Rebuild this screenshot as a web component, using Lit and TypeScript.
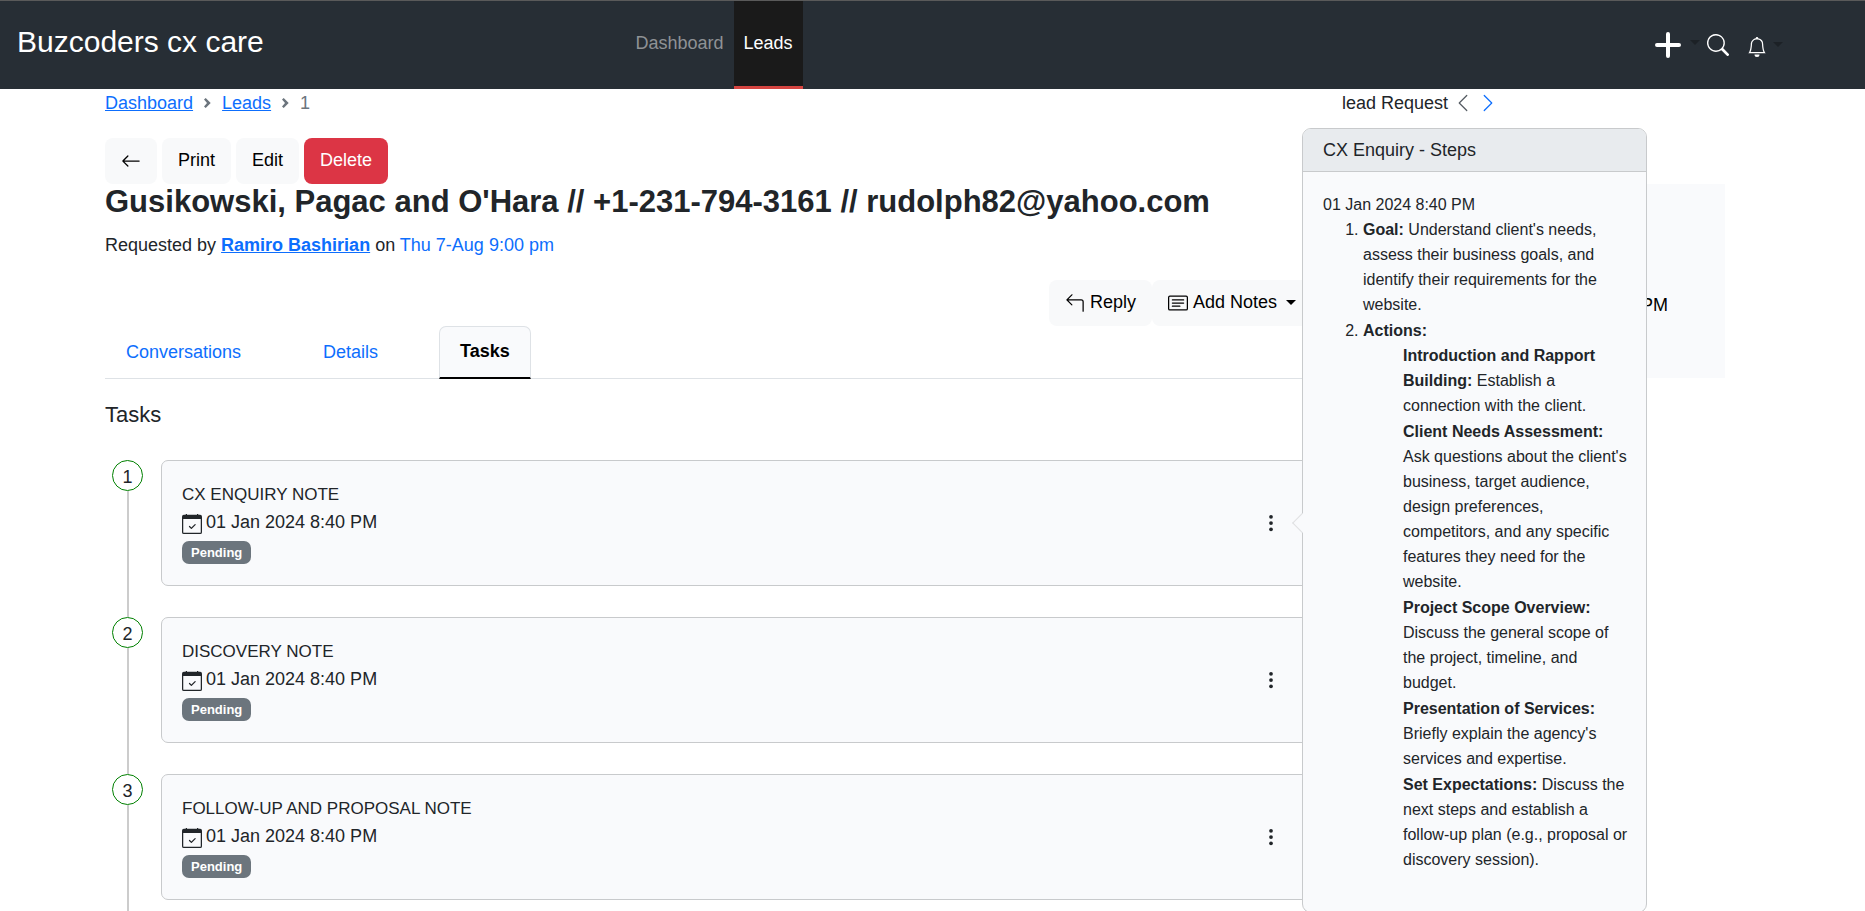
import { LitElement, html, css, svg } from "lit";
import { customElement, property } from "lit/decorators.js";

const shared = css`
  * { box-sizing: border-box; }
  a { color: #0d6efd; }
  svg { display: block; fill: currentColor; flex: none; }
  button { font: inherit; color: inherit; border: 0; margin: 0; cursor: pointer; }
  .caret { border-top: 5px solid; border-left: 5px solid transparent; border-right: 5px solid transparent; }
`;

const icons: Record<string, unknown> = {
  plus: svg`<path fill-rule="evenodd" d="M8 2a.5.5 0 0 1 .5.5v5h5a.5.5 0 0 1 0 1h-5v5a.5.5 0 0 1-1 0v-5h-5a.5.5 0 0 1 0-1h5v-5A.5.5 0 0 1 8 2" stroke="currentColor" stroke-width="1"/>`,
  search: svg`<path d="M11.742 10.344a6.5 6.5 0 1 0-1.397 1.398h-.001q.044.06.098.115l3.85 3.85a1 1 0 0 0 1.415-1.414l-3.85-3.85a1 1 0 0 0-.115-.1zM12 6.5a5.5 5.5 0 1 1-11 0 5.5 5.5 0 0 1 11 0"/>`,
  bell: svg`<path d="M8 16a2 2 0 0 0 2-2H6a2 2 0 0 0 2 2M8 1.918l-.797.161A4 4 0 0 0 4 6c0 .628-.134 2.197-.459 3.742-.16.767-.376 1.566-.663 2.258h10.244c-.287-.692-.502-1.49-.663-2.258C12.134 8.197 12 6.628 12 6a4 4 0 0 0-3.203-3.92zM14.22 12c.223.447.481.801.78 1H1c.299-.199.557-.553.78-1C2.68 10.2 3 6.88 3 6c0-2.42 1.72-4.44 4.005-4.901a1 1 0 1 1 1.99 0A5 5 0 0 1 13 6c0 .88.32 4.2 1.22 6"/>`,
  left: svg`<path fill-rule="evenodd" d="M11.354 1.646a.5.5 0 0 1 0 .708L5.707 8l5.647 5.646a.5.5 0 0 1-.708.708l-6-6a.5.5 0 0 1 0-.708l6-6a.5.5 0 0 1 .708 0"/>`,
  right: svg`<path fill-rule="evenodd" d="M4.646 1.646a.5.5 0 0 1 .708 0l6 6a.5.5 0 0 1 0 .708l-6 6a.5.5 0 0 1-.708-.708L10.293 8 4.646 2.354a.5.5 0 0 1 0-.708"/>`,
  back: svg`<path fill-rule="evenodd" d="M15 8a.5.5 0 0 0-.5-.5H2.707l3.147-3.146a.5.5 0 1 0-.708-.708l-4 4a.5.5 0 0 0 0 .708l4 4a.5.5 0 0 0 .708-.708L2.707 8.500H14.5A.5.5 0 0 0 15 8"/>`,
  reply: svg`<path fill-rule="evenodd" d="M14.500 15a.5.5 0 0 0 .5-.5V7a2 2 0 0 0-2-2H2.700l3.150-3.150a.5.5 0 1 0-.700-.700l-4 4a.5.5 0 0 0 0 .700l4 4a.5.5 0 0 0 .700-.700L2.700 6H13a1 1 0 0 1 1 1v7.500a.5.5 0 0 0 .5.5"/>`,
  notes: svg`<path d="M14.500 3a.5.5 0 0 1 .5.5v9a.5.5 0 0 1-.5.5h-13a.5.5 0 0 1-.5-.5v-9a.5.5 0 0 1 .5-.5zm-13-1A1.500 1.500 0 0 0 0 3.500v9A1.500 1.500 0 0 0 1.500 14h13a1.500 1.500 0 0 0 1.500-1.500v-9A1.500 1.500 0 0 0 14.500 2z"/><path d="M3 5.500a.5.5 0 0 1 .5-.5h9a.5.5 0 0 1 0 1h-9a.5.5 0 0 1-.5-.5M3 8a.5.5 0 0 1 .5-.5h9a.5.5 0 0 1 0 1h-9A.5.5 0 0 1 3 8m0 2.500a.5.5 0 0 1 .5-.5h6a.5.5 0 0 1 0 1h-6a.5.5 0 0 1-.5-.5"/>`,
  calendar: svg`<path d="M10.854 8.146a.5.5 0 0 1 0 .708l-3 3a.5.5 0 0 1-.708 0l-1.500-1.500a.5.5 0 0 1 .708-.708L7.500 10.793l2.646-2.647a.5.5 0 0 1 .708 0"/><path fill-rule="evenodd" d="M3 0h1v.6h8V0h1v.6h1.500A1.500 1.500 0 0 1 16 2.100v12.400a1.500 1.500 0 0 1-1.500 1.500h-13A1.500 1.500 0 0 1 0 14.500V2.100A1.500 1.500 0 0 1 1.500.6H3zM1 4v10.500a.5.5 0 0 0 .5.5h13a.5.5 0 0 0 .5-.5V4z"/>`,
  dots: svg`<circle cx="8" cy="3" r="1.500"/><circle cx="8" cy="8" r="1.500"/><circle cx="8" cy="13" r="1.500"/>`,
};

const icon = (name: string, size: number) => html`
  <svg width=${size} height=${size} viewBox="0 0 16 16" aria-hidden="true">${icons[name]}</svg>`;

const separator = html`
  <li aria-hidden="true"><svg width="7" height="10" viewBox="0 0 7 10"><path d="M0 1.400 1.700 0 6.700 5 1.700 10 0 8.600 3 5z"/></svg></li>`;

@customElement("site-header")
class SiteHeader extends LitElement {
  static styles = [shared, css`
    :host {
      display: grid; grid-template-columns: 1fr auto 1fr; height: 89px;
      background: #272e35; color: #fff; border-top: 1px solid #5a5a5a;
    }
    .brand { font-size: 30px; line-height: 36px; padding: 23px 17px; color: #fff; text-decoration: none; }
    nav { display: flex; margin-right: 437px; }
    .link { padding: 28px 10px 0; color: #8f9295; text-decoration: none; border-bottom: 3px solid transparent; }
    .current { color: #fff; background: #1a1a1a; border-bottom-color: #d64541; }
    .tools { display: flex; justify-content: flex-end; align-items: center; align-self: start; padding: 28px 82px 0 0; }
    .tool { display: flex; align-items: center; background: none; padding: 0; gap: 6px; }
    .caret { color: #1c2126; margin-bottom: 5px; }
    .search { margin: 0 18px 0 7px; }
    .bell { padding-top: 4px; }
  `];

  render() {
    return html`
      <a class="brand" href="#">Buzcoders cx care</a>
      <nav aria-label="Main">
        <a class="link" href="#">Dashboard</a>
        <a class="link current" href="#" aria-current="page">Leads</a>
      </nav>
      <div class="tools">
        <button class="tool" aria-label="Create">${icon("plus", 32)}<span class="caret"></span></button>
        <button class="tool search" aria-label="Search">${icon("search", 22)}</button>
        <button class="tool bell" aria-label="Notifications">${icon("bell", 20)}<span class="caret"></span></button>
      </div>`;
  }
}

@customElement("task-card")
class TaskCard extends LitElement {
  @property({ type: Number }) index = 1;
  @property() name = "";
  @property() due = "";
  @property() status = "";

  static styles = [shared, css`
    :host { display: grid; grid-template-columns: 56px 1fr; }
    .rail { display: flex; flex-direction: column; align-items: center; width: 45px; }
    .number {
      flex: none; width: 31px; height: 31px; border: 1px solid #008000; border-radius: 50%;
      display: flex; align-items: center; justify-content: center; padding-top: 2px;
    }
    .line { flex: 1; width: 2px; background: #ccc; }
    .card {
      display: flex; align-items: center; justify-content: space-between; margin-bottom: 31px;
      padding: 20px; border: 1px solid #c8cacc; border-radius: 7px; background: #f9fafc;
    }
    .name { margin: 0; font-size: 17px; line-height: 27px; font-weight: 400; }
    .due { display: flex; align-items: center; gap: 4px; margin: 0; line-height: 29px; }
    .due svg { margin-top: 3px; }
    .badge {
      font-size: 13px; line-height: 13px; font-weight: 700; color: #fff;
      background: #6c757d; border-radius: 7px; padding: 5px 9px;
    }
    .status { display: flex; padding: 4px 0 1px; }
    .menu { background: none; padding: 0; margin-right: 10px; }
  `];

  render() {
    return html`
      <div class="rail"><span class="number">${this.index}</span><span class="line"></span></div>
      <article class="card">
        <div>
          <h3 class="name">${this.name}</h3>
          <p class="due">${icon("calendar", 20)}<time>${this.due}</time></p>
          <div class="status"><span class="badge">${this.status}</span></div>
        </div>
        <button class="menu" aria-label="Task options">${icon("dots", 20)}</button>
      </article>`;
  }
}

@customElement("steps-popover")
class StepsPopover extends LitElement {
  static styles = [shared, css`
    :host {
      display: block; width: 345px; border: 1px solid #c8cacc; border-radius: 9px;
      background: #f9fafc; font-size: 16px; line-height: 25px;
    }
    .title {
      margin: 0; padding: 10px 20px; font-size: 18px; line-height: 22px; font-weight: 400;
      background: #e8ebee; border-bottom: 1px solid #c8cacc; border-radius: 8px 8px 0 0;
    }
    .body { padding: 20px 16px 20px 20px; }
    ol, ul { margin: 0; padding-left: 40px; }
    ol { margin-bottom: 20px; }
    ul { list-style: none; }
    li + li { margin-top: 1px; }
    .arrow {
      position: absolute; left: -8px; top: 387px; width: 14px; height: 14px; transform: rotate(45deg);
      background: #f9fafc; border: solid #dfe0e2; border-width: 0 0 1px 1px;
    }
  `];

  private actions = [
    ["Introduction and Rapport Building:", "Establish a connection with the client."],
    ["Client Needs Assessment:", "Ask questions about the client's business, target audience, design preferences, competitors, and any specific features they need for the website."],
    ["Project Scope Overview:", "Discuss the general scope of the project, timeline, and budget."],
    ["Presentation of Services:", "Briefly explain the agency's services and expertise."],
    ["Set Expectations:", "Discuss the next steps and establish a follow-up plan (e.g., proposal or discovery session)."],
  ];

  render() {
    return html`
      <span class="arrow"></span>
      <h3 class="title">CX Enquiry - Steps</h3>
      <div class="body">
        <time>01 Jan 2024 8:40 PM</time>
        <ol>
          <li><strong>Goal:</strong> Understand client's needs, assess their business goals, and identify their requirements for the website.</li>
          <li><strong>Actions:</strong>
            <ul>${this.actions.map(([head, text]) => html`<li><strong>${head}</strong> ${text}</li>`)}</ul>
          </li>
        </ol>
      </div>`;
  }
}

@customElement("app-root")
class AppRoot extends LitElement {
  static styles = [shared, css`
    :host {
      display: block; height: 100vh; overflow: auto; scrollbar-width: none; background: #fff; color: #212529;
      font-family: "Liberation Sans", Arial, sans-serif; font-size: 18px; line-height: 28px;
    }
    .page { position: relative; padding: 0 140px 0 105px; }
    .top { display: grid; grid-template-columns: 1fr 383px; }
    .crumbs { display: flex; align-items: center; gap: 11px; list-style: none; margin: 0; padding: 0; color: #6c757d; }
    .pager { display: flex; align-items: center; gap: 5px; }
    .prev { color: #545b62; display: flex; }
    .next { display: flex; }
    .actions { display: flex; gap: 5px; padding-top: 21px; }
    .btn {
      display: flex; align-items: center; gap: 5px; padding: 8px 16px 10px; border-radius: 8px;
      background: #f8f9fa; color: #000; line-height: 28px;
    }
    .btn svg { margin-top: 2px; }
    .btn .caret { margin-left: 4px; }
    .danger { background: #dc3545; color: #fff; }
    .columns { display: grid; grid-template-columns: minmax(0, 1fr) 400px; gap: 13px; align-items: start; }
    .lead { margin: 0; font-size: 31px; line-height: 36px; font-weight: 700; white-space: nowrap; }
    .meta { margin: 11px 0 0; }
    .when { text-decoration: none; }
    .reply-bar { display: flex; justify-content: flex-end; padding-top: 21px; }
    .tabs { display: flex; gap: 40px; border-bottom: 1px solid #dee2e6; }
    .tab {
      background: none; color: #0d6efd; padding: 10px 20px 12px; border: 1px solid transparent;
      border-bottom-width: 0; border-radius: 7px 7px 0 0; line-height: 28px;
    }
    .selected {
      color: #000; font-weight: 700; background: #f9fafc; border-color: #dee2e6;
      border-bottom: 2px solid #000; margin-bottom: -1px;
    }
    .heading { margin: 22px 0 32px; font-size: 22px; line-height: 27px; font-weight: 400; }
    .aside { background: #f9fafc; height: 194px; padding: 107px 57px 0 0; text-align: right; color: #000; }
    .pop { position: absolute; top: 39px; right: 218px; }
  `];

  private tasks = ["CX ENQUIRY NOTE", "DISCOVERY NOTE", "FOLLOW-UP AND PROPOSAL NOTE"];

  render() {
    return html`
      <site-header></site-header>
      <main class="page">
        <div class="top">
          <ol class="crumbs">
            <li><a href="#">Dashboard</a></li>${separator}
            <li><a href="#">Leads</a></li>${separator}
            <li>1</li>
          </ol>
          <div class="pager">
            <span>lead Request</span>
            <a class="prev" href="#" aria-label="Previous lead">${icon("left", 20)}</a>
            <a class="next" href="#" aria-label="Next lead">${icon("right", 20)}</a>
          </div>
        </div>
        <div class="actions">
          <button class="btn" aria-label="Back">${icon("back", 20)}</button>
          <button class="btn">Print</button>
          <button class="btn">Edit</button>
          <button class="btn danger">Delete</button>
        </div>
        <div class="columns">
          <section>
            <h1 class="lead">Gusikowski, Pagac and O'Hara // +1-231-794-3161 // rudolph82@yahoo.com</h1>
            <p class="meta">Requested by <a href="#"><strong>Ramiro Bashirian</strong></a> on <a class="when" href="#">Thu 7-Aug 9:00 pm</a></p>
            <div class="reply-bar">
              <button class="btn">${icon("reply", 20)}Reply</button>
              <button class="btn">${icon("notes", 20)}Add Notes<span class="caret"></span></button>
            </div>
            <div class="tabs" role="tablist">
              <button class="tab" role="tab">Conversations</button>
              <button class="tab" role="tab">Details</button>
              <button class="tab selected" role="tab" aria-selected="true">Tasks</button>
            </div>
            <h2 class="heading">Tasks</h2>
            ${this.tasks.map((name, i) => html`
              <task-card .index=${i + 1} .name=${name} due="01 Jan 2024 8:40 PM" status="Pending"></task-card>`)}
          </section>
          <aside class="aside">8:40 PM</aside>
        </div>
        <steps-popover class="pop"></steps-popover>
      </main>`;
  }
}
